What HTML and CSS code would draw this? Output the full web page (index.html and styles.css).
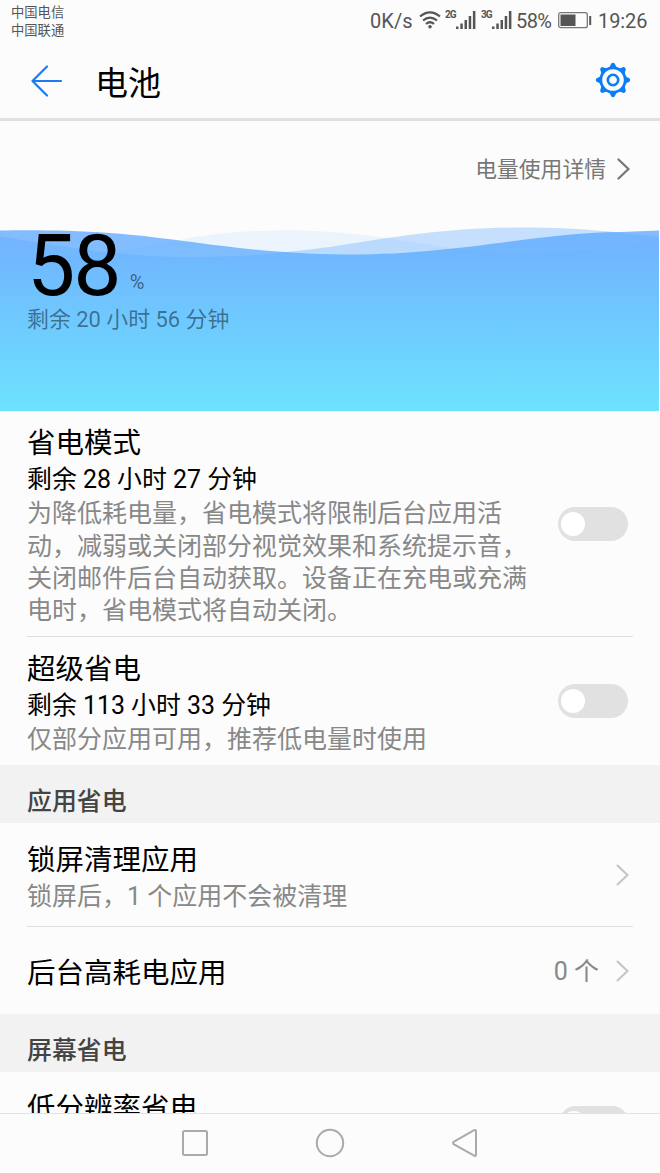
FILE: index.html
```html
<!DOCTYPE html>
<html lang="zh-CN">
<head>
<meta charset="utf-8">
<title>电池</title>
<link rel="stylesheet" href="styles.css">
</head>
<body>
<div class="screen">
  <div class="status">
    <div class="carriers"><span>中国电信</span><span>中国联通</span></div>
    <div class="indicators">
      <span class="speed">0K/s</span>
      <svg class="wifi" width="22" height="18" viewBox="0 0 22 18" fill="none" stroke="#555" stroke-width="2.2"><path d="M1 5.5Q11-2.8 21 5.5M4 9.5Q11 3.8 18 9.5M7 13Q11 9.5 15 13"/><circle cx="11" cy="15.8" r="1.8" fill="#555" stroke="none"/></svg>
      <span class="net">2G</span>
      <svg class="bars" width="20" height="19" viewBox="0 0 20 19" fill="#555"><path d="M0 15.5h2.5V18H0zM4.3 12.5h2.5V18H4.3zM8.5 9H11v9H8.5zM12.7 5h2.5v13h-2.5zM16.9 0h2.5v18h-2.5z"/></svg>
      <span class="net net-second">3G</span>
      <svg class="bars" width="20" height="19" viewBox="0 0 20 19" fill="#555"><path d="M0 15.5h2.5V18H0zM4.3 12.5h2.5V18H4.3zM8.5 9H11v9H8.5zM12.7 5h2.5v13h-2.5zM16.9 0h2.5v18h-2.5z"/></svg>
      <span class="percent">58%</span>
      <svg class="battery" width="34" height="17" viewBox="0 0 34 17"><rect x=".7" y=".7" width="28.6" height="15" rx="2" fill="none" stroke="#777" stroke-width="1.3"/><path d="M2.5 2.5h15v11.4h-15zM31.2 4h2v9h-2z" fill="#555"/></svg>
      <span class="clock">19:26</span>
    </div>
  </div>

  <header class="header">
    <svg class="back" width="32" height="32" viewBox="0 0 32 32" fill="none" stroke="#1a7cf0" stroke-width="2.2" stroke-linecap="round" stroke-linejoin="round"><path d="M30 16H2M16 1.500L1.500 16L16 30.500"/></svg>
    <h1 class="heading">电池</h1>
    <svg class="gear" width="36" height="36" viewBox="-18 -18 36 36" fill="none" stroke="#0d7df5">
      <circle r="12.200" stroke-width="2.800"/><circle r="5.200" stroke-width="2.600"/>
      <g fill="#0d7df5" stroke="none">
        <path id="tooth" d="M-4.800-12.200Q-2.700-13.400-2.300-15.300Q-1.800-17.200 0-17.200Q1.800-17.200 2.300-15.300Q2.700-13.400 4.800-12.200z"/>
        <use href="#tooth" transform="rotate(45)"/><use href="#tooth" transform="rotate(90)"/><use href="#tooth" transform="rotate(135)"/><use href="#tooth" transform="rotate(180)"/><use href="#tooth" transform="rotate(225)"/><use href="#tooth" transform="rotate(270)"/><use href="#tooth" transform="rotate(315)"/>
      </g>
    </svg>
  </header>

  <section class="level">
    <svg class="waves" width="659" height="184" viewBox="0 0 659 184">
      <defs><linearGradient id="water" gradientUnits="userSpaceOnUse" x1="0" y1="15" x2="0" y2="184"><stop offset="0" stop-color="#55a5ff"/><stop offset="1" stop-color="#51deff"/></linearGradient></defs>
      <g fill="url(#water)">
        <path opacity=".1" d="M0 29C80 34 140 20 180 13C215 6 245 3.500 290 3.500C350 3.500 400 13 450 21C530 32 590 22 659 15V184H0z"/>
        <path opacity=".33" d="M0 9.500C60 19 120 30 190 30C250 30 290 25 330 20C400 9 450 .5 525 .5C580 .5 615 5 659 10V184H0z"/>
        <path opacity=".73" d="M0 3.500C30 3 70 3 110 6C190 12 240 26 345 27.500C460 28 530 6 620 5L659 3.500V184H0z"/>
      </g>
    </svg>
    <div class="details"><span>电量使用详情</span><svg class="chevron dark" width="13" height="22" viewBox="0 0 13 22"><path d="M1.500 1.500L11.500 11L1.500 20.500"/></svg></div>
    <div class="charge"><span class="number">58</span><span class="unit">%</span></div>
    <div class="remaining">剩余 20 小时 56 分钟</div>
  </section>

  <section class="mode">
    <div class="copy">
      <h2 class="title">省电模式</h2>
      <p class="estimate">剩余 28 小时 27 分钟</p>
      <p class="description">为降低耗电量，省电模式将限制后台应用活<br>动，减弱或关闭部分视觉效果和系统提示音，<br>关闭邮件后台自动获取。设备正在充电或充满<br>电时，省电模式将自动关闭。</p>
    </div>
    <div class="switch"><i class="knob"></i></div>
  </section>
  <hr class="divider">
  <section class="mode super">
    <div class="copy">
      <h2 class="title">超级省电</h2>
      <p class="estimate">剩余 113 小时 33 分钟</p>
      <p class="description">仅部分应用可用，推荐低电量时使用</p>
    </div>
    <div class="switch"><i class="knob"></i></div>
  </section>

  <h3 class="section-title">应用省电</h3>
  <div class="row row-clean">
    <div class="copy"><div class="title">锁屏清理应用</div><div class="description">锁屏后，1 个应用不会被清理</div></div>
    <svg class="chevron" width="13" height="22" viewBox="0 0 13 22"><path d="M1.500 1.500L11.500 11L1.500 20.500"/></svg>
  </div>
  <hr class="divider">
  <div class="row row-background">
    <div class="title">后台高耗电应用</div>
    <div class="value"><span>0 个</span><svg class="chevron" width="13" height="22" viewBox="0 0 13 22"><path d="M1.500 1.500L11.500 11L1.500 20.500"/></svg></div>
  </div>
  <h3 class="section-title">屏幕省电</h3>
  <div class="row row-resolution">
    <div class="title">低分辨率省电</div>
    <div class="switch"><i class="knob"></i></div>
  </div>

  <nav class="navbar">
    <svg width="28" height="30" viewBox="0 0 28 30"><rect x="2" y="3" width="24" height="24" rx="1.500"/></svg>
    <svg width="30" height="30" viewBox="0 0 30 30"><circle cx="15" cy="15" r="13.200"/></svg>
    <svg width="28" height="30" viewBox="0 0 28 30"><path d="M2 15Q2 14.200 3 13.600L23.200 2.200Q25 1.500 25 3.500V26.500Q25 28.500 23.200 27.600L3 16.400Q2 15.800 2 15z"/></svg>
  </nav>
</div>
</body>
</html>
```
FILE: styles.css
```css
* { box-sizing: border-box; margin: 0; padding: 0; }
body { background: #fcfcfc; font-family: Roboto, "Noto Sans CJK SC", sans-serif; overflow: hidden; }
svg { display: block; flex: none; }
.screen { width: 660px; height: 1173px; display: flex; flex-direction: column; background: #fcfcfc; overflow: hidden; }
.screen > * { flex: none; }

.status { height: 42px; display: flex; justify-content: space-between; padding: 0 13px 0 11px; color: #555; }
.carriers { display: flex; flex-direction: column; padding-top: 4px; font-size: 13.3px; line-height: 18px; font-weight: 400; color: #555; }
.indicators { display: flex; align-items: center; height: 41px; font-size: 20px; line-height: 24px; white-space: nowrap; }
.speed { width: 43px; letter-spacing: .1px; margin-left: -1px; }
.wifi { margin: 0 0 2px 6px; }
.net { width: 11px; margin: 0 0 11px 4px; font-size: 10px; line-height: 10px; font-weight: 700; letter-spacing: -1px; }
.net-second { margin-left: 5px; }
.bars { margin: 0; }
.percent { width: 38px; letter-spacing: -.6px; margin-left: 4px; }
.battery { margin: 0 0 1px 4px; }
.clock { width: 49px; margin-left: 6px; letter-spacing: -.1px; }

.header { height: 79px; display: flex; align-items: center; padding: 0 29px 0 31px; border-bottom: 3px solid #e0e0e0; }
.back { margin-top: 1px; }
.heading { margin-left: 32px; font-size: 33px; line-height: 40px; font-weight: 400; color: #000; padding-top: 8px; }
.gear { margin-left: auto; }

.level { position: relative; height: 290px; }
.waves { position: absolute; left: 0; bottom: 0; }
.details { position: relative; height: 97px; display: flex; align-items: center; justify-content: flex-end; gap: 11px; padding: 0 30px 2px 0; font-size: 21.8px; line-height: 30px; font-weight: 400; color: #777; }
.details span { padding-top: 3px; }
.chevron { fill: none; stroke: #c4c4c4; stroke-width: 2; stroke-linecap: round; stroke-linejoin: round; }
.chevron.dark { stroke: #777; stroke-width: 2.3; }
.charge { position: relative; height: 84px; display: flex; align-items: baseline; padding-left: 27px; line-height: 95px; color: #000; }
.number { font-size: 86px; letter-spacing: -2px; }
.unit { font-size: 20px; margin-left: 10px; color: rgba(0,0,0,.5); position: relative; top: -6px; }
.remaining { position: relative; padding: 2px 27px 0; font-size: 21.9px; line-height: 32px; color: rgba(0,0,0,.46); font-weight: 400; }

.mode { display: flex; justify-content: space-between; align-items: center; height: 225px; padding: 0 32px 0 27px; }
.mode .copy { padding-top: 6px; }
.super { height: 128px; }
.title { font-size: 28.5px; line-height: 38px; font-weight: 400; color: #000; white-space: nowrap; }
.estimate { font-size: 24.9px; line-height: 33px; color: #000; white-space: nowrap; }
.description { padding-top: 2px; font-size: 25px; line-height: 32.4px; font-weight: 400; color: #888; white-space: nowrap; }
.switch { flex: none; width: 70px; height: 34px; padding: 5px 3px; border-radius: 17px; background: #e1e1e1; }
.knob { display: block; width: 24px; height: 24px; border-radius: 50%; background: #fff; }
.divider { height: 1px; margin: 0 27px; border: 0; background: #dedede; }

.section-title { height: 58px; padding: 15px 27px 0; background: #f2f2f2; font-size: 24.9px; line-height: 44px; font-weight: 500; color: #444; }
.row { display: flex; align-items: center; justify-content: space-between; padding: 0 31px 0 27px; }
.row-clean { height: 103px; }
.row-clean .copy { padding-top: 7px; }
.row-clean .description { padding-top: 1px; }
.row-background { height: 87px; }
.row-background .title { padding-top: 7px; }
.value { display: flex; align-items: center; gap: 17px; font-size: 25px; line-height: 32px; font-weight: 400; color: #888; }
.value span { margin-top: 3px; }
.row-resolution { height: 41px; align-items: flex-start; overflow: hidden; padding-top: 18px; }
.row-resolution .switch { margin-top: 16px; }

.navbar { height: 60px; border-top: 1px solid #e2e2e2; background: #fcfcfc; display: flex; align-items: center; justify-content: center; gap: 106px; padding-bottom: 2px; }
.navbar svg { fill: none; stroke: #aaa; stroke-width: 2; stroke-linejoin: round; }
```
